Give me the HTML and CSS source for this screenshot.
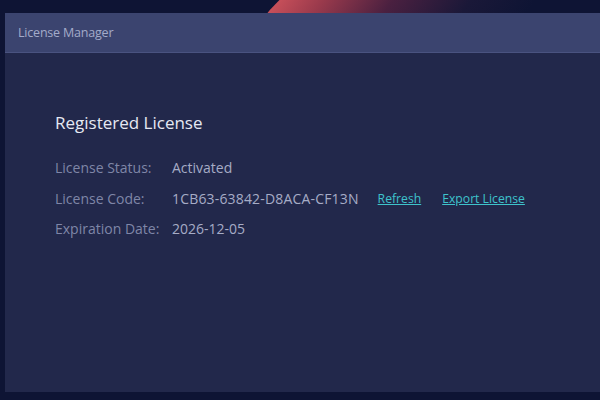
FILE: index.html
```html
<!DOCTYPE html>
<html>
<head>
<meta charset="utf-8">
<link rel="stylesheet" href="styles.css">
</head>
<body>
<div class="desk">
  <div class="glow"></div>
  <div class="window">
    <div class="titlebar">License Manager</div>
    <div class="content">
      <h1 class="heading">Registered License</h1>
      <div class="rows">
        <div class="label">License Status:</div>
        <div class="value">Activated</div>
        <div class="label">License Code:</div>
        <div class="value code-row"><span class="code">1CB63-63842-D8ACA-CF13N</span><a class="link" href="#">Refresh</a><a class="link" href="#">Export License</a></div>
        <div class="label">Expiration Date:</div>
        <div class="value">2026-12-05</div>
      </div>
    </div>
  </div>
</div>
</body>
</html>
```
FILE: styles.css
```css
html, body {
  margin: 0;
  padding: 0;
  width: 600px;
  height: 400px;
  overflow: hidden;
  background: #0e1434;
  font-family: "Open Sans", "Noto Sans", sans-serif;
}
.desk {
  position: relative;
  width: 600px;
  height: 400px;
  padding: 13px 0 0 5px;
  box-sizing: border-box;
}
.glow {
  position: absolute;
  left: 248px;
  top: -40px;
  width: 260px;
  height: 80px;
  border-radius: 60px 0 0 0;
  background: linear-gradient(90deg, #c9505a 0%, #9a3a4c 18%, #4a2040 45%, #1a1838 75%, #0e1434 100%);
  transform: skewX(-35deg);
  transform-origin: bottom left;
}
.window {
  position: relative;
  width: 600px;
  height: 379px;
  background: #22284b;
  display: flex;
  flex-direction: column;
}
.titlebar {
  height: 40px;
  background: #3b446f;
  border-bottom: 1px solid #4a5380;
  box-sizing: border-box;
  color: #a3abc9;
  font-size: 12.5px;
  display: flex;
  align-items: center;
  padding-left: 13px;
  letter-spacing: -0.2px;
}
.content {
  padding: 58px 0 0 50px;
}
.heading {
  margin: 0 0 22px 0;
  font-size: 17px;
  font-weight: 400;
  color: #e6e9f3;
  line-height: 24px;
}
.rows {
  display: grid;
  grid-template-columns: 117px auto;
  row-gap: 8.5px;
  font-size: 14px;
  line-height: 22px;
}
.label {
  color: #7f86a7;
}
.value {
  color: #a6acc6;
}
.code {
  letter-spacing: 0.17px;
}
.code-row {
  display: flex;
  align-items: center;
  gap: 19px;
}
.link {
  color: #3ec3cb;
  font-size: 12.2px;
  text-decoration: underline;
}
.link + .link {
  margin-left: 2px;
}
```
